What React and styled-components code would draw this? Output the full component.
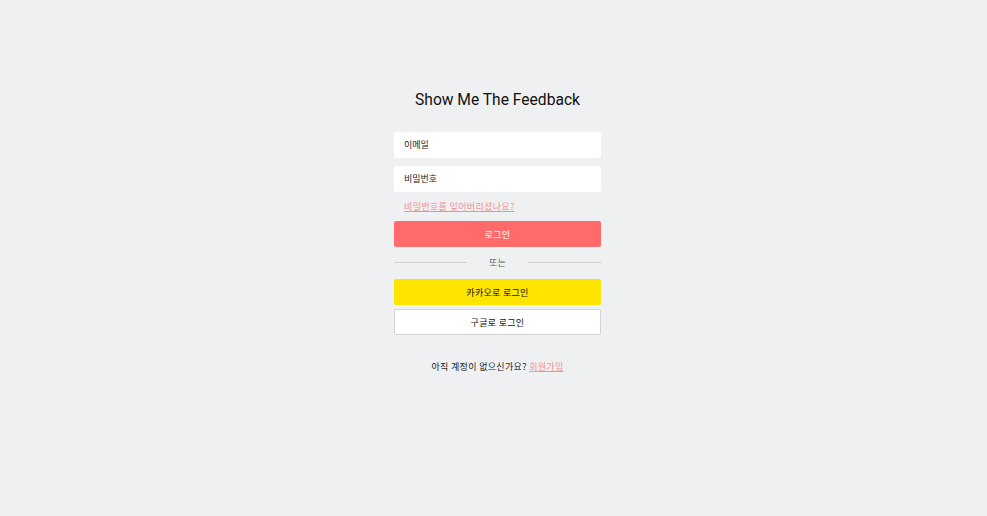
import React from "react";
import styled, { createGlobalStyle } from "styled-components";

const Global = createGlobalStyle`
  html, body { margin: 0; padding: 0; background: #eff0f2; }
  body { font-family: Roboto, "Noto Sans CJK KR", sans-serif; }
  * { box-sizing: border-box; }
`;

const Page = styled.div`
  min-height: 516px;
  display: flex;
  justify-content: center;
  padding: 88px 0 0 8px;
`;

const Form = styled.div`
  width: 207px;
  display: flex;
  flex-direction: column;
`;

const Title = styled.h1`
  margin: 2px 0 21px;
  font-family: Roboto, sans-serif;
  font-weight: 400;
  font-size: 15.6px;
  line-height: 21px;
  text-align: center;
  color: #111;
`;

const Input = styled.input`
  height: 26px;
  border: none;
  border-radius: 2px;
  background: #fff;
  padding: 0 10px;
  font-family: Roboto, "Noto Sans CJK KR", sans-serif;
  font-size: 9px;
  color: #222;
  margin-bottom: 8px;
  outline: none;
  &::placeholder { color: #222; }
`;

const Forgot = styled.a`
  margin: 0 0 7px 10px;
  font-family: "Noto Sans CJK KR", sans-serif;
  font-size: 9px;
  letter-spacing: 0.35px;
  line-height: 14px;
  color: #f29090;
  text-decoration: underline;
  cursor: pointer;
`;

const Button = styled.button`
  height: 26px;
  border-radius: 2px;
  border: ${(p) => (p.$outline ? "1px solid #d4d4d6" : "none")};
  background: ${(p) => p.$bg};
  color: ${(p) => p.$color};
  font-family: "Noto Sans CJK KR", sans-serif;
  font-size: 9px;
  letter-spacing: 0.3px;
  cursor: pointer;
  margin-bottom: ${(p) => p.$mb || 0}px;
`;

const Divider = styled.div`
  display: flex;
  align-items: center;
  height: 30px;
  margin-bottom: 2px;
  gap: 22px;
  color: #666;
  font-family: "Noto Sans CJK KR", sans-serif;
  font-size: 9px;
  letter-spacing: 0.3px;
  &::before, &::after {
    content: "";
    flex: 1;
    height: 1px;
    background: #cfd0d3;
  }
`;

const Signup = styled.p`
  margin: 25px 0 0;
  text-align: center;
  font-family: "Noto Sans CJK KR", sans-serif;
  font-size: 9px;
  letter-spacing: 0.33px;
  color: #222;
`;

const SignupLink = styled.a`
  color: #f29090;
  text-decoration: underline;
  cursor: pointer;
`;

export default function App() {
  return (
    <>
      <Global />
      <Page>
        <Form>
          <Title>Show Me The Feedback</Title>
          <Input placeholder="이메일" />
          <Input type="password" placeholder="비밀번호" />
          <Forgot>비밀번호를 잊어버리셨나요?</Forgot>
          <Button $bg="#ff6b6b" $color="#fff">로그인</Button>
          <Divider>또는</Divider>
          <Button $bg="#fee500" $color="#111" $mb={4}>카카오로 로그인</Button>
          <Button $bg="#fff" $color="#111" $outline>구글로 로그인</Button>
          <Signup>
            아직 계정이 없으신가요? <SignupLink>회원가입</SignupLink>
          </Signup>
        </Form>
      </Page>
    </>
  );
}
